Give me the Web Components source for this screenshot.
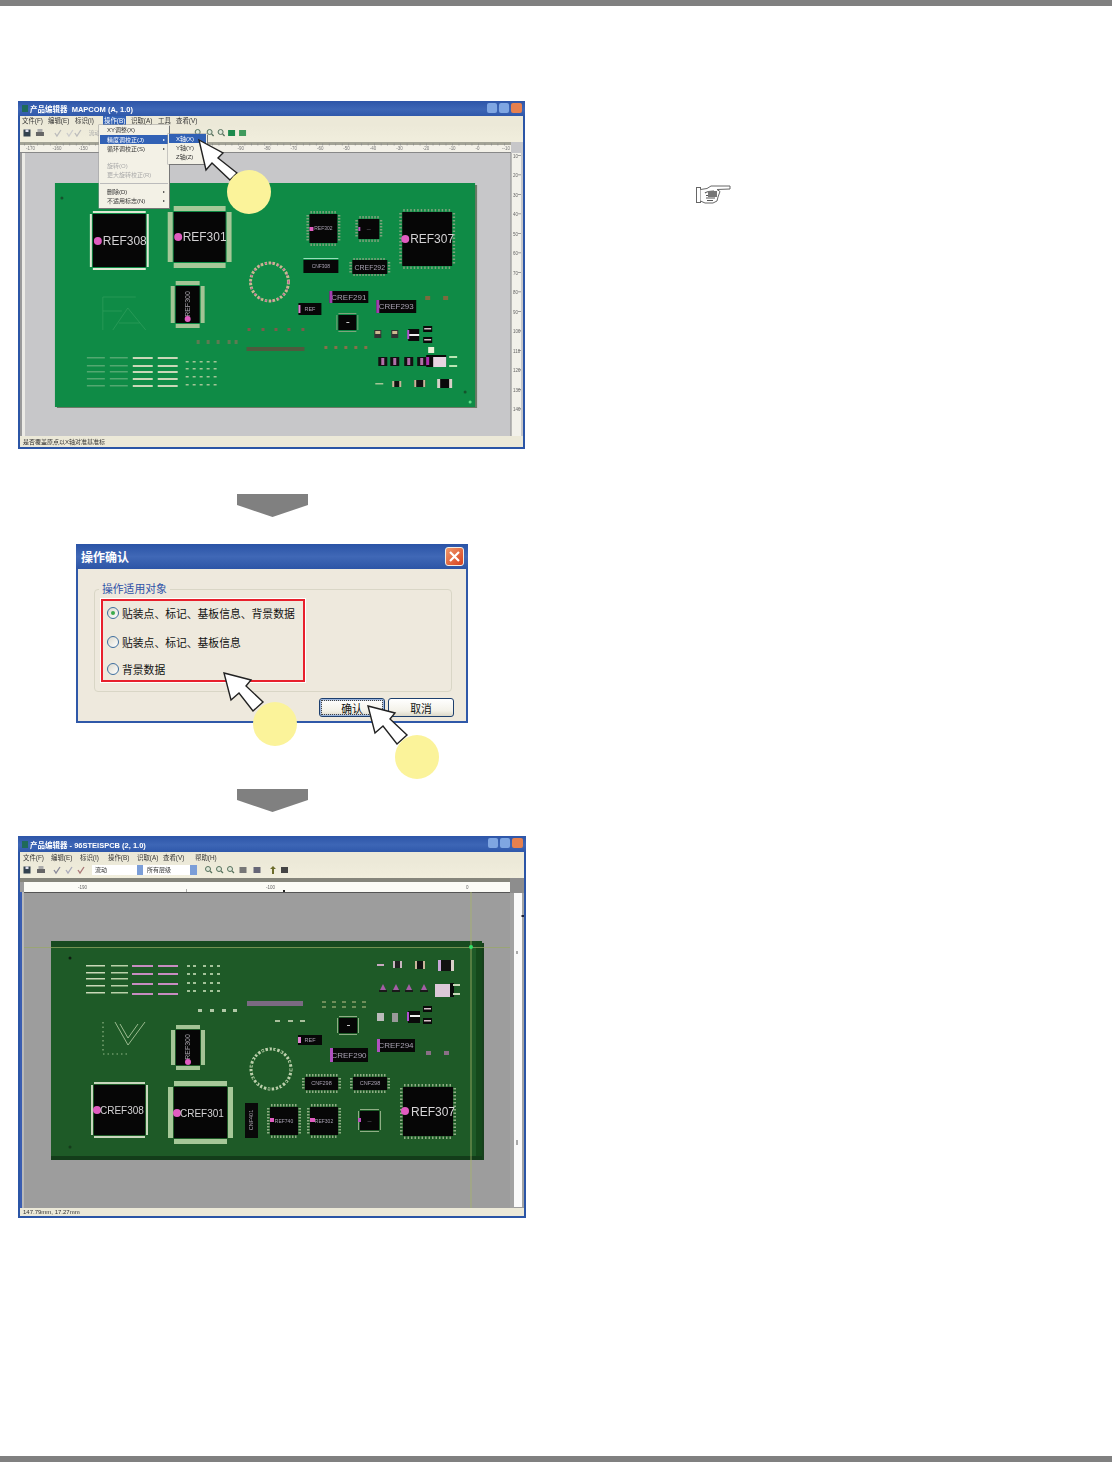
<!DOCTYPE html>
<html lang="zh">
<head>
<meta charset="utf-8">
<title>操作确认</title>
<style>
html,body{margin:0;padding:0;background:#fff}
body{font-family:"Liberation Sans","Noto Sans CJK SC",sans-serif}
</style>
</head>
<body>
<doc-page>
  <left-col slot="left">
    <xp-window id="w1" style="margin-top:95px;width:507px;height:348px" caption="产品编辑器  MAPCOM (A, 1.0)" tall="15,9,17,11">
      <menu-bar slot="menu" items="文件(F):1,编辑(E):27,标识(I):54,操作(B):83:on,识取(A):110,工具:137,查看(V):155"></menu-bar>
      <tool-strip slot="tools" variant="a"></tool-strip>
      <pcb-view slot="canvas" variant="a"></pcb-view>
      <span slot="status">是否覆盖原点以X轴对准基准标</span>
      <xp-menu slot="overlay" style="left:81px;top:24px;width:70px" items="XY调整(X);+1;*精度调校正(J)>;循环调校正(S)>;+8;~旋转(O);~更大旋转校正(R);-;删除(D)>;不适用标志(N)>"></xp-menu>
      <xp-menu slot="overlay" style="left:150px;top:33px;width:39px" items="*X轴(X);Y轴(Y);Z轴(Z)"></xp-menu>
    </xp-window>
    <doc-arrow style="margin:45px 0 0 219px"></doc-arrow>
    <confirm-dialog style="margin:27px 0 0 58px">
      <radio-row checked>贴装点、标记、基板信息、背景数据</radio-row>
      <radio-row>贴装点、标记、基板信息</radio-row>
      <radio-row>背景数据</radio-row>
    </confirm-dialog>
    <doc-arrow style="margin:66px 0 0 219px"></doc-arrow>
    <xp-window id="w2" style="margin-top:24px;width:508px;height:382px" caption="产品编辑器 - 96STEISPCB (2, 1.0)" tall="16,10,16,11">
      <menu-bar slot="menu" items="文件(F):2,编辑(E):30,标识(I):59,操作(B):87,识取(A):116,查看(V):142,帮助(H):174"></menu-bar>
      <tool-strip slot="tools" variant="b"></tool-strip>
      <pcb-view slot="canvas" variant="b"></pcb-view>
      <span slot="status">147.79mm, 17.27mm</span>
    </xp-window>
    <step-pointer tip="199,134" dot="249,186" shape="tilt"></step-pointer>
    <step-pointer tip="224,667" dot="275,718"></step-pointer>
    <step-pointer tip="368,700" dot="417,751"></step-pointer>
  </left-col>
  <hand-icon slot="right"></hand-icon>
</doc-page>
<script>
const FONT='"Liberation Sans","Noto Sans CJK SC",sans-serif';
function def(name,css,html,init){
  customElements.define(name,class extends HTMLElement{
    constructor(){super();const r=this.attachShadow({mode:'open'});r.innerHTML='<style>'+css+'</style>'+html;}
    connectedCallback(){if(init)init(this,this.shadowRoot);}
  });
}

def('doc-page',`:host{display:flex;flex-direction:column;width:1112px;height:1462px;overflow:hidden}
 .rule{height:6px;background:#808080;flex:none}
 .main{flex:1;display:grid;grid-template-columns:526px 1fr;min-height:0}
 .right{padding:179px 0 0 170px}`,
 `<div class="rule"></div><div class="main"><div><slot name="left"></slot></div><div class="right"><slot name="right"></slot></div></div><div class="rule"></div>`);

def('left-col',`:host{display:flex;flex-direction:column;align-items:flex-start;position:relative;padding-left:18px;box-sizing:border-box;width:526px}`,`<slot></slot>`);

def('doc-arrow',`:host{display:block;width:71px;height:23px;flex:none}svg{display:block}`,
 `<svg width="71" height="23" viewBox="0 0 71 23"><path d="M0 0H71V11L35.500 23L0 11Z" fill="#808080"/></svg>`);

def('hand-icon',`:host{display:block;width:35px;height:20px}svg{display:block;filter:blur(.5px)}`,
 `<svg width="35" height="20" viewBox="0 0 35 20" fill="none" stroke="#666" stroke-width="1">
 <rect x=".5" y="2.500" width="4" height="15" fill="#fff"/>
 <path d="M4.500 4.500L11 3.500L15 1H34V4L21 4.500L24 6.500L22 12L21 16L17 18H9L4.500 16" fill="#fff"/>
 <path d="M9 8C11 6.500 14 6 18 6M10 10.500H20M10 13H19M11 15.500H17" stroke="#555" stroke-width="1.200"/>
 <path d="M12 6H21V12H12Z" fill="#777" stroke="none"/>
 </svg>`);

def('step-pointer',`:host{position:absolute;left:0;top:0;width:0;height:0;display:block}
 svg{position:absolute;left:0;top:0;overflow:visible}`,
 `<svg width="1" height="1"><path id="c" fill="#fff" stroke="#222" stroke-width="1.400" stroke-linejoin="miter"/><circle id="d" r="22" fill="#fbf39a"/></svg>`,
 (el,r)=>{
  const [x,y]=el.getAttribute('tip').split(',').map(Number),[dx,dy]=el.getAttribute('dot').split(',').map(Number);
  const o=el.getAttribute('shape')==='tilt'
    ?[[0,0],[24,13],[19,18],[38,33],[31,40],[13,23],[7,30]]
    :[[0,0],[27,7],[22,13],[39,29],[29,38],[15,20],[7,27]];
  r.getElementById('c').setAttribute('d','M'+o.map(p=>(x+p[0])+' '+(y+p[1])).join('L')+'Z');
  const d=r.getElementById('d');d.setAttribute('cx',dx);d.setAttribute('cy',dy);
 });

def('xp-window',`:host{display:block;flex:none;box-sizing:border-box;position:relative;background:#2b55a6;font-family:${FONT}}
 .in{filter:blur(.7px);display:flex;flex-direction:column;height:100%;position:relative}
 .title{display:flex;align-items:center;gap:2px;padding-left:4px;color:#fff;font-size:7.500px;font-weight:700;background:linear-gradient(#2d55a8,#3d66b6 55%,#2f58aa);flex:none;white-space:pre;position:relative}
 .ico{width:6px;height:7px;background:#1f6a5a}
 .btns{position:absolute;right:3px;top:2px;display:flex;gap:2px}
 .btns i{display:block;width:10px;height:10px;border-radius:2px;background:#7fa6e2;border:0}
 .btns i:last-child{background:#e6804e;width:11px}
 .menu{flex:none;background:#ece9d8;margin:0 2px}
 .tools{flex:none;margin:0 2px;background:linear-gradient(#ece9d8,#f1eedd)}
 .canvas{flex:1;min-height:0;margin:0 2px;overflow:hidden;background:#c6c6c8}
 .status{flex:none;margin:0 2px 2px;background:#ece9d8;font-size:6px;color:#333;display:flex;align-items:center;padding-left:3px;white-space:nowrap}
 ::slotted([slot=overlay]){position:absolute}`,
 `<div class="in">
   <div class="title"><span class="ico"></span><span id="cap"></span><span class="btns"><i></i><i></i><i></i></span></div>
   <div class="menu"><slot name="menu"></slot></div>
   <div class="tools"><slot name="tools"></slot></div>
   <div class="canvas"><slot name="canvas"></slot></div>
   <div class="status"><slot name="status"></slot></div>
   <slot name="overlay"></slot>
 </div>`,
 (el,r)=>{
  r.getElementById('cap').textContent=el.getAttribute('caption');
  const [t,m,tl,s]=el.getAttribute('tall').split(',').map(Number);
  r.querySelector('.title').style.height=t+'px';
  r.querySelector('.menu').style.height=m+'px';
  r.querySelector('.tools').style.height=tl+'px';
  r.querySelector('.status').style.height=s-(el.id==='w2'?3:0)+'px';
 });

def('menu-bar',`:host{display:block;height:100%;position:relative;font-size:6.400px;color:#333;font-family:${FONT}}
 .row{display:flex;height:100%}
 span{position:absolute;top:0;bottom:0;display:flex;align-items:center;padding:0 1px;white-space:nowrap}
 .on{background:#3161b5;color:#fff}`,`<div class="row"></div>`,
 (el,r)=>{
  const row=r.querySelector('.row');
  el.getAttribute('items').split(',').forEach(s=>{
    const [t,x,on]=s.split(':');const e=document.createElement('span');
    e.textContent=t;e.style.left=x+'px';if(on)e.className='on';row.appendChild(e);
  });
 });

def('xp-menu',`:host{display:block;box-sizing:border-box;background:#f3f1e6;box-shadow:1px 1px 0 #777,0 0 0 .5px #999;font-size:6px;color:#333;font-family:${FONT};z-index:2;padding:0 1px 3px}
 .i{height:9px;display:flex;align-items:center;justify-content:space-between;padding:0 3px 0 7px;white-space:nowrap}
 .hi{background:#3161b5;color:#fff}.dim{color:#aaa}
 .gap{display:block}.sep{height:8px;display:flex;align-items:center}.sep:before{content:"";flex:1;height:1px;background:#bbb}
 b{font-size:4px;font-weight:400}`,`<div id="l"></div>`,
 (el,r)=>{
  const l=r.getElementById('l');
  el.getAttribute('items').split(';').forEach(s=>{
    const e=document.createElement('div');
    if(s[0]==='+'){e.style.height=s.slice(1)+'px';l.appendChild(e);return;}
    if(s==='-'){e.className='sep';l.appendChild(e);return;}
    e.className='i';
    if(s[0]==='*'){e.classList.add('hi');s=s.slice(1);}
    if(s[0]==='~'){e.classList.add('dim');s=s.slice(1);}
    const sub=s.endsWith('>');if(sub)s=s.slice(0,-1);
    const t=document.createElement('span');t.textContent=s;e.appendChild(t);
    if(sub){const a=document.createElement('b');a.textContent='▸';e.appendChild(a);}
    l.appendChild(e);
  });
 });

function rc(x,y,w,h,f,o){return `<rect x="${x}" y="${y}" width="${w}" height="${h}" fill="${f}" ${o||''}/>`;}
function tx(x,y,s,size,f,o){return `<text x="${x}" y="${y}" font-size="${size}" fill="${f}" font-family='Liberation Sans,Noto Sans CJK SC,sans-serif' ${o||''}>${s}</text>`;}

def('tool-strip',`:host{display:block;height:100%}svg{display:block;width:100%;height:100%}`,`<svg></svg>`,
 (el,r)=>{
  const v=el.getAttribute('variant');const svg=r.querySelector('svg');
  const y=v==='a'?133:870, top=v==='a'?125:862, h=v==='a'?17:16;
  svg.setAttribute('viewBox',`20 ${top} 504 ${h}`);
  let s='';
  const save=x=>rc(x-3.5,y-3.5,7,7,'#33424f')+rc(x-1.500,y-3.5,3,2.500,'#dde');
  const print=x=>rc(x-4,y-1,8,4,'#666')+rc(x-2.500,y-4,5,3,'#aaa');
  const chk=(x,c)=>`<path d="M${x-3} ${y}L${x-1} ${y+3}L${x+3} ${y-3}" stroke="${c}" stroke-width="1.300" fill="none"/>`;
  const zoom=x=>`<circle cx="${x}" cy="${y-1}" r="2.500" fill="#dfe7d8" stroke="#56705c"/><path d="M${x+2} ${y+1}L${x+4} ${y+3}" stroke="#56705c" stroke-width="1.300"/>`;
  const grid=(x,c)=>rc(x-3.5,y-3,7,6,c);
  s+=save(27)+print(v==='a'?40:41);
  if(v==='a'){
    s+=chk(58,'#bbb')+chk(70,'#ccc')+chk(78,'#bbb');
    s+=tx(89,y+2,'流动',5.500,'#aaa');
    s+=zoom(198)+zoom(210)+zoom(221)+grid(232,'#1c8a4c')+grid(243,'#3f9a5c');
  }else{
    s+=chk(57,'#889')+chk(69,'#aab')+chk(81,'#a77');
    s+=rc(92,y-5,45,10,'#fff')+rc(137,y-5,6,10,'#7b9ed8')+rc(143,y-5,47,10,'#fff')+rc(190,y-5,7,10,'#7b9ed8');
    s+=tx(95,y+2,'流动',6,'#333')+tx(147,y+2,'所有层级',6,'#333');
    s+=zoom(208)+zoom(219)+zoom(230)+grid(243,'#777')+grid(257,'#667');
    s+=`<path d="M273 ${y-4}L276 ${y-1}H274V${y+4}H272V${y-1}H270Z" fill="#6c6c2c"/>`+rc(281,y-3,7,6,'#444');
  }
  svg.innerHTML=s;
 });

function bars(x,w,ys,h,c){return ys.map(y=>rc(x,y,w,h,c)).join('');}
function dots(xs,ys,c,w,h){let s='';ys.forEach(y=>xs.forEach(x=>s+=rc(x,y,w||3,h||2,c)));return s;}
function ticks(x,y,w,h,c,step){
  let s='';const st=step||3;
  for(let i=x+1;i<x+w-1;i+=st){s+=rc(i,y-3,1.500,2.500,c)+rc(i,y+h+.5,1.500,2.500,c);}
  for(let j=y+1;j<y+h-1;j+=st){s+=rc(x-3,j,2.500,1.500,c)+rc(x+w+.5,j,2.500,1.500,c);}
  return s;
}
function band(x,y,w,h,c,t){return rc(x,y-t-1,w,t,c)+rc(x,y+h+1,w,t,c)+rc(x-t-1,y,t,h,c)+rc(x+w+1,y,t,h,c);}
function pill(x,y,c){return `<circle cx="${x}" cy="${y}" r="4" fill="${c}"/>`;}
function lab(x,y,w,h,s,size){return rc(x,y,w,h,'#070707')+tx(x+w/2,y+h/2+size*.36,s,size,'#a9a2b2','text-anchor="middle"');}
function ring(cx,cy,r_,a,b){return `<circle cx="${cx}" cy="${cy}" r="${r_}" fill="none" stroke="${a}" stroke-width="3" stroke-dasharray="2.500 1.500"/><circle cx="${cx}" cy="${cy}" r="${r_}" fill="none" stroke="${b}" stroke-width="1.500" stroke-dasharray="1.500 5"/>`;}
function vtext(x,y,s,size,f){return tx(x,y,s,size,f,`transform="rotate(-90 ${x} ${y})" text-anchor="middle"`);}

function sceneA(){
  let s='';
  s+=rc(20,142,504,294,'#c7c7c9');
  /* rulers */
  s+=rc(20,142,492,3,'#a3a396')+rc(20,145,492,7,'#f3f1e8')+rc(20,152,492,1,'#888')+rc(512,142,12,11,'#c7c7c9');
  for(let x=26,i=0;x<505;x+=26.500,i++){if(x<95||x>212)s+=tx(x,150.500,'-'+(170-i*10),4.500,'#777');}
  for(let x=24;x<510;x+=6.500){s+=rc(x,143.500,.7,2,'#888');}
  s+=rc(20,153,2,283,'#9a9a9a')+rc(22,153,3,283,'#ecebe6');
  s+=rc(512,153,10,283,'#f2f1ea')+rc(511.500,153,1,283,'#888');
  for(let y=158,i=0;y<430;y+=19.500,i++){s+=tx(514,y,(i*10+10),4.500,'#666')+rc(519,y-3,3,.7,'#777');}
  /* board */
  s+=rc(57,185,421,223,'#6b7a66');
  s+=rc(55,183,421,224,'#0f8b46');
  s+=`<circle cx="62" cy="198" r="1.500" fill="#14532c"/>`;
  /* big chips */
  s+=band(93,214,53,53,'#dfe8d4',2)+rc(93,214,53,53,'#060606');
  s+=pill(98,241,'#e05cc0')+tx(103,245.500,'REF308',12,'#d4d2d4');
  s+=band(174,212,52,50,'#a6c898',5)+rc(174,212,52,50,'#060606');
  s+=pill(178.500,237,'#e05cc0')+tx(183,241.500,'REF301',12,'#d4d2d4');
  s+=band(176,286,24,37,'#a3c495',4)+rc(176,286,24,37,'#060606');
  s+=vtext(190,304,'REF300',7,'#a8a3ab')+`<circle cx="188" cy="319" r="3" fill="#e05cc0"/>`;
  /* FA silk */
  s+=`<path d="M103 297H136M103 297V330M103 311H122M113 330L128 308L146 330M119 323H140" fill="none" stroke="#3ea667" stroke-width="1" opacity=".5"/>`;
  /* pad rows */
  const yy=[357,365,371,378,385];
  s+=bars(87,18,yy,1.500,'#53a870')+bars(110,18,yy,1.500,'#53a870');
  s+=bars(133,20,yy,2,'#c9d8b8')+bars(158,20,yy,2,'#c9d8b8');
  s+=dots([186,193,200,207,214],[361,368,376,384],'#a3c596',3,1.500);
  /* ring */
  s+=ring(270,282,19,'#c8b98f','#c060a0');
  /* small rows */
  s+=dots([248,262,275,288,302],[328],'#7c5b4b',3,3)+dots([197,207,217,228,235],[340],'#5d7b52',3,4);
  s+=rc(247,347,58,4,'#4e5a3d')+dots([325,335,345,355,365],[346],'#86714a',3,3);
  /* upper right chips */
  s+=ticks(310,214,28,29,'#7ea37c')+lab(310,214,28,29,'REF302',5)+rc(310,227,4,4,'#e05cc0');
  s+=ticks(359,219,21,20,'#7ea37c')+lab(359,219,21,20,'—',4)+rc(359,227,2,4,'#c050c0');
  s+=ticks(403,212,50,54,'#7ea37c',3.500)+rc(403,212,50,54,'#060606');
  s+=pill(406,239,'#e05cc0')+tx(411,243.500,'REF307',12,'#d4d2d4');
  s+=lab(304,260,35,13,'CNF308',5)+rc(304,258,35,1,'#9db');
  s+=ticks(353,261,35,12,'#7ea37c')+lab(353,260,35,14,'CREF292',7);
  s+=lab(330,291,39,12,'CREF291',8)+rc(330,291,3,12,'#a040b0');
  s+=lab(377,300,40,13,'CREF293',8)+rc(377,300,3,13,'#a040b0');
  s+=lab(299,303,23,12,'REF',5.500)+rc(299,305,2,8,'#e080d0');
  s+=band(339,315,18,15,'#7ea37c',1)+rc(339,315,18,15,'#060606')+rc(347,322,3,1,'#ccc');
  /* parts right */
  s+=dots([426,444],[296],'#7d6a3e',5,4);
  s+=rc(375,330,7,8,'#333')+rc(376,331,5,3,'#cdbb90')+rc(392,330,7,8,'#333')+rc(393,331,5,3,'#cdbb90');
  s+=rc(409,329,11,12,'#0a0a0a')+rc(408,330,2,9,'#b050d0')+rc(410,334,10,2,'#eee');
  s+=rc(424,326,9,6,'#0a0a0a')+rc(425,328,7,1.500,'#d8c0c8')+rc(424,337,9,6,'#0a0a0a')+rc(425,339,7,1.500,'#d8c0c8');
  [379,391,405,418].forEach(x=>{s+=rc(x,357,9,9,'#111')+rc(x+3,358,3,7,'#b070a8');});
  s+=rc(427,355,20,12,'#0a0a0a')+rc(427,357,3,8,'#b030b0')+rc(434,357,13,10,'#e8d4e2')+rc(429,347,6,6,'#e9f2d8');
  s+=rc(450,356,8,2,'#b9e6b4')+rc(450,365,8,2,'#b9e6b4');
  s+=rc(376,383,8,1.500,'#a3c596')+rc(394,381,7,6,'#111')+rc(393,381,2,6,'#c9b69a')+rc(400,381,2,6,'#c9b69a');
  s+=rc(415,380,11,7,'#111')+rc(415,380,2,7,'#c9b69a')+rc(424,380,2,7,'#c9b69a');
  s+=rc(439,379,13,9,'#0a0a0a')+rc(438,379,3,9,'#d8d0c8')+rc(450,379,3,9,'#d8d0c8');
  s+=`<circle cx="466" cy="392" r="1.500" fill="#14532c"/><circle cx="471" cy="402" r="1.500" fill="#5fe08a"/>`;
  return s;
}

function sceneB(){
  let s='';
  s+=rc(20,878,504,330,'#9d9d9d');
  s+=rc(20,878,490,4,'#85857b')+rc(24,882,486,10,'#fbfbf6')+rc(24,892,486,1,'#555');
  s+=tx(78,889,'-190',4.500,'#666')+tx(266,889,'-100',4.500,'#666')+tx(466,889,'0',4.500,'#666');
  s+=rc(283,890,2,2,'#222')+rc(186,889,.8,3,'#999');
  s+=rc(20,892,2,316,'#3a5db0')+rc(22,892,2,316,'#b9b9b9');
  s+=rc(510,878,14,15,'#8d8d8d')+rc(510,893,4,315,'#a2a2a2')+rc(514,893,8,314,'#fbfbfb')+rc(522,893,2,314,'#a4a4a4');
  s+=rc(521.500,915,2.500,2,'#223')+rc(516,951,2,3,'#aaa')+rc(516,1140,2,5,'#aaa');
  /* board */
  s+=rc(53,943,431,217,'#17401c');
  s+=rc(51,941,431,219,'#1e5a27');
  s+=rc(51,941,431,6,'#184a20')+rc(476,941,6,219,'#14491b')+rc(51,1156,431,4,'#133d1a');
  s+=rc(24,947,486,.7,'#9aaa66')+rc(470.600,892,.8,316,'#a9b56a');
  s+=`<circle cx="471" cy="947" r="2" fill="#31e266"/><circle cx="70" cy="958" r="1.500" fill="#0d1d10"/><circle cx="70" cy="1147" r="1.500" fill="#153c1b"/>`;
  /* pad rows */
  const yy=[965,972,978,985,992],pp=[965,973,983,993];
  s+=bars(86,19,yy,1.500,'#c9d8b8')+bars(111,17,yy,1.500,'#b9d0a8');
  s+=bars(132,21,pp,2,'#c68cc0')+bars(158,20,pp,2,'#c68cc0');
  s+=dots([187,193,203,210,217],[965,973,982,990],'#a4c39a',3,2);
  s+=dots([198,210,222,233],[1009],'#b0c8a6',4,3);
  /* silk */
  s+=`<path d="M115 1022L128 1045L145 1022M120 1024L128 1038L138 1024" fill="none" stroke="#a7c49a" stroke-width=".9"/>`;
  s+=`<path d="M103 1022V1052M103 1054H128" stroke="#8fb585" stroke-width="1.200" stroke-dasharray="1.500 3"/>`;
  /* chips */
  s+=band(176,1030,24,35,'#a3c495',4)+rc(176,1030,24,35,'#060606');
  s+=vtext(190,1047,'REF300',7,'#a8a3ab')+`<circle cx="188" cy="1062" r="3" fill="#e05cc0"/>`;
  s+=band(94,1085,51,50,'#c9d6bd',2)+rc(94,1085,51,50,'#060606');
  s+=pill(97,1110,'#e05cc0')+tx(100,1114,'CREF308',10,'#d4d2d4');
  s+=band(174,1087,53,51,'#a6c898',5)+rc(174,1087,53,51,'#060606');
  s+=pill(177,1113,'#e05cc0')+tx(180,1117,'CREF301',10,'#d4d2d4');
  s+=ring(271,1069,20,'#bcd0ac','#215f28');
  s+=rc(245,1103,13,35,'#090909')+vtext(253,1120,'CNF401',5.500,'#b0a8b4');
  s+=ticks(270,1107,28,28,'#8fae85')+lab(270,1107,28,28,'REF740',5)+rc(270,1118,4,4,'#e05cc0');
  s+=ticks(310,1107,28,28,'#8fae85')+lab(310,1107,28,28,'REF302',5)+rc(310,1118,5,4,'#e05cc0');
  s+=band(360,1111,19,19,'#8fae85',1)+lab(360,1111,19,19,'—',4)+rc(358,1118,3,4,'#c050c0');
  s+=ticks(403,1087,50,49,'#8fae85',3.500)+rc(403,1087,50,49,'#060606');
  s+=pill(405,1111,'#e05cc0')+tx(411,1115.500,'REF307',12,'#d8d6d8');
  s+=ticks(305,1077,33,13,'#8fae85')+lab(305,1077,33,13,'CNF298',5.500);
  s+=ticks(353,1077,34,13,'#8fae85')+lab(353,1077,34,13,'CNF298',5.500);
  s+=lab(330,1048,38,14,'CREF290',8)+rc(330,1048,3,14,'#b050c0');
  s+=lab(377,1039,38,13,'CREF294',8)+rc(377,1039,3,13,'#b050c0');
  s+=lab(298,1035,24,10,'REF',5.500)+rc(298,1037,3,6,'#e080d0');
  s+=band(339,1018,18,15,'#8fae85',1)+rc(339,1018,18,15,'#060606')+rc(347,1025,3,1,'#ccc');
  s+=dots([426,444],[1051],'#8a6f86',5,4);
  /* parts top right */
  s+=rc(247,1001,56,5,'#7a6a82')+dots([322,332,342,352,362],[1001,1006],'#6f8f5a',4,2);
  s+=dots([275,288,300],[1020],'#a9c09c',5,2);
  s+=rc(377,964,7,2,'#c8a8c0')+rc(393,961,9,7,'#222')+rc(393,961,2,7,'#c9b6c0')+rc(400,961,2,7,'#c9b6c0');
  s+=rc(415,961,10,8,'#111')+rc(415,961,2,8,'#c9b69a')+rc(423,961,2,8,'#c9b69a');
  s+=rc(439,960,13,11,'#111')+rc(438,960,3,11,'#c8a8d8')+rc(451,960,3,11,'#d8d0c8');
  [379,392,405,420].forEach(x=>{s+=`<path d="M${x} ${992}L${x+4} ${984}L${x+8} ${992}Z" fill="#a45ea5"/>`+rc(x,990,8,2,'#1a1a1a');});
  s+=rc(435,984,15,13,'#dcc8d8')+rc(450,983,4,14,'#0a0a0a')+rc(453,984,7,2,'#c9d8b8')+rc(453,993,7,2,'#c9d8b8');
  s+=rc(377,1013,7,8,'#bbb')+rc(392,1013,6,9,'#999');
  s+=rc(408,1011,12,12,'#0a0a0a')+rc(407,1012,2,9,'#b050d0')+rc(410,1015,10,2,'#eee');
  s+=rc(423,1006,9,6,'#0a0a0a')+rc(424,1008,7,1.500,'#d8c0c8')+rc(423,1018,9,6,'#0a0a0a')+rc(424,1020,7,1.500,'#d8c0c8');
  return s;
}

def('pcb-view',`:host{display:block;height:100%}svg{display:block;width:100%;height:100%}`,`<svg preserveAspectRatio="none"></svg>`,
 (el,r)=>{
  const a=el.getAttribute('variant')==='a',svg=r.querySelector('svg');
  svg.setAttribute('viewBox',a?'20 142 504 294':'20 878 504 330');
  svg.innerHTML=a?sceneA():sceneB();
 });

def('radio-row',`:host{display:flex;align-items:center;height:16px;gap:3px;font-size:10.800px;color:#111;white-space:nowrap;font-family:${FONT}}
 i{display:block;box-sizing:border-box;width:12px;height:12px;border-radius:50%;border:1.500px solid #3f6f9f;background:linear-gradient(135deg,#dcd9cc,#fff);position:relative;flex:none}
 :host([checked]) i:after{content:"";position:absolute;left:2.500px;top:2.500px;width:4px;height:4px;border-radius:50%;background:#3cab4c}`,
 `<i></i><span><slot></slot></span>`);

def('xp-button',`:host{display:flex;align-items:center;justify-content:center;width:66px;height:19px;box-sizing:border-box;border:1px solid #1d3f6e;border-radius:3px;background:linear-gradient(#fff,#f3f1e8 70%,#dcd8c8);font-size:10.800px;color:#111;font-family:${FONT}}
 :host([focus]){box-shadow:inset 0 0 0 1.500px #9ab4dc}
 :host([focus]) span{outline:1px dotted #444;outline-offset:0;width:60px;height:13px;display:flex;align-items:center;justify-content:center}`,
 `<span><slot></slot></span>`);

def('confirm-dialog',`:host{display:flex;flex-direction:column;flex:none;width:392px;height:179px;box-sizing:border-box;background:#2f58a8;font-family:${FONT};padding:0 2px 2px}
 .title{height:25px;margin:0 -2px;padding:0 3px 0 5px;display:flex;align-items:center;justify-content:space-between;background:linear-gradient(#2a53a6,#4068b6 50%,#2d55a6);color:#fff;font-size:12px;font-weight:700;flex:none}
 .x{width:19px;height:19px;box-sizing:border-box;border:1px solid #f2eee6;border-radius:3px;background:linear-gradient(135deg,#ef9a6c,#d8401e);display:flex;align-items:center;justify-content:center;margin-right:1px}
 .body{flex:1;min-height:0;background:#eee9dd;padding:20px 13px 0 16px;display:flex;flex-direction:column}
 .group{position:relative;height:103px;width:358px;box-sizing:border-box;border:1px solid #d9d6c6;border-radius:4px;padding:9px 0 0 6px;flex:none}
 .legend{position:absolute;left:4px;top:-7px;background:#eee9dd;padding:0 3px;color:#2f52a8;font-size:10.800px;line-height:13px;white-space:nowrap}
 .red{box-sizing:border-box;width:204px;height:83px;border:2px solid #e8202c;outline:1px solid #fff;padding:4px 0 0 4px;display:flex;flex-direction:column}
 ::slotted(radio-row:nth-child(2)){margin-top:13px}
 ::slotted(radio-row:nth-child(3)){margin-top:11px}
 .foot{display:flex;justify-content:flex-end;gap:3px;margin-top:6px;margin-right:-1px;flex:none}`,
 `<div class="title"><span>操作确认</span><span class="x"><svg width="13" height="13" viewBox="0 0 13 13"><path d="M2 2L11 11M11 2L2 11" stroke="#fff" stroke-width="2.200"/></svg></span></div>
 <div class="body"><div class="group"><span class="legend">操作适用对象</span><div class="red"><slot></slot></div></div>
 <div class="foot"><xp-button focus>确认</xp-button><xp-button>取消</xp-button></div></div>`);
</script>
</body>
</html>
